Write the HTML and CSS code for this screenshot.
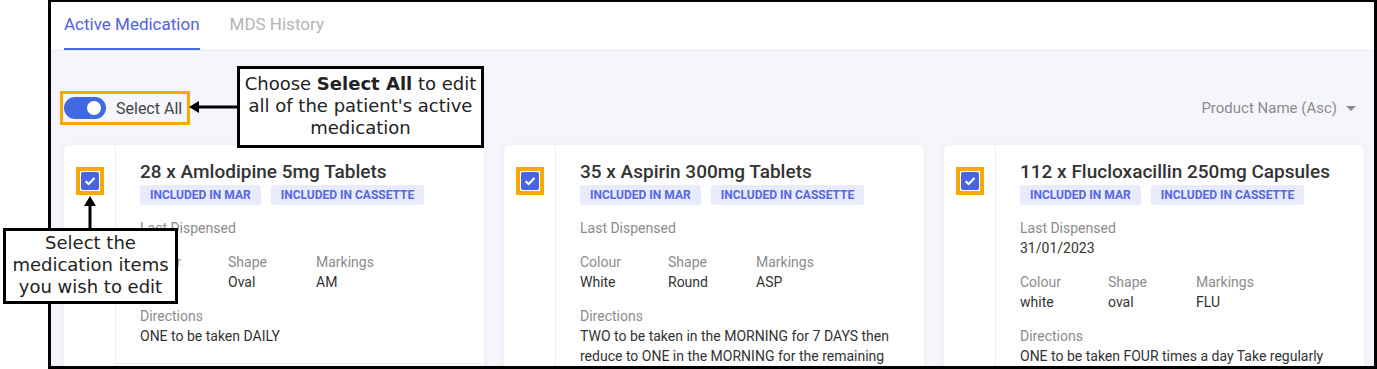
FILE: index.html
```html
<!DOCTYPE html>
<html lang="en">
<head>
    <meta charset="UTF-8">
    <title>Active Medication</title>
    <link rel="stylesheet" href="styles.css">
</head>
<body>
    <div class="frame">
        <nav class="tabs">
            <a class="tab active">Active Medication</a>
            <a class="tab">MDS History</a>
        </nav>

        <main class="content">
            <div class="toolbar">
                <label class="select-all">
                    <span class="switch"><span class="knob"></span></span>
                    <span>Select All</span>
                </label>
                <div class="sort">
                    Product Name (Asc)
                    <svg width="10" height="5" viewBox="0 0 10 5"><polygon points="0,0 10,0 5,5" fill="#8a8a8a"/></svg>
                </div>
            </div>

            <div class="cards">
                <article class="card">
                    <div class="card-check">
                        <span class="check-hl"><span class="checkbox"><svg width="14" height="14" viewBox="0 0 14 14"><polyline points="2.5,7.2 5.6,10 11.5,4" fill="none" stroke="#fff" stroke-width="2"/></svg></span></span>
                    </div>
                    <div class="card-main">
                        <div class="card-body">
                            <h3>28 x Amlodipine 5mg Tablets</h3>
                            <div class="chips">
                                <span class="chip">Included in MAR</span>
                                <span class="chip">Included in Cassette</span>
                            </div>
                            <div class="field">
                                <div class="label">Last Dispensed</div>
                                <div class="value"></div>
                            </div>
                            <div class="props">
                                <div class="prop"><div class="label">Colour</div><div class="value">White</div></div>
                                <div class="prop"><div class="label">Shape</div><div class="value">Oval</div></div>
                                <div class="prop"><div class="label">Markings</div><div class="value">AM</div></div>
                            </div>
                            <div class="field">
                                <div class="label">Directions</div>
                                <div class="value">ONE to be taken DAILY</div>
                            </div>
                        </div>
                        <div class="card-foot"></div>
                    </div>
                </article>

                <article class="card">
                    <div class="card-check">
                        <span class="check-hl"><span class="checkbox"><svg width="14" height="14" viewBox="0 0 14 14"><polyline points="2.5,7.2 5.6,10 11.5,4" fill="none" stroke="#fff" stroke-width="2"/></svg></span></span>
                    </div>
                    <div class="card-main">
                        <div class="card-body">
                            <h3>35 x Aspirin 300mg Tablets</h3>
                            <div class="chips">
                                <span class="chip">Included in MAR</span>
                                <span class="chip">Included in Cassette</span>
                            </div>
                            <div class="field">
                                <div class="label">Last Dispensed</div>
                                <div class="value"></div>
                            </div>
                            <div class="props">
                                <div class="prop"><div class="label">Colour</div><div class="value">White</div></div>
                                <div class="prop"><div class="label">Shape</div><div class="value">Round</div></div>
                                <div class="prop"><div class="label">Markings</div><div class="value">ASP</div></div>
                            </div>
                            <div class="field">
                                <div class="label">Directions</div>
                                <div class="value">TWO to be taken in the MORNING for 7 DAYS then reduce to ONE in the MORNING for the remaining days</div>
                            </div>
                        </div>
                        <div class="card-foot"></div>
                    </div>
                </article>

                <article class="card">
                    <div class="card-check">
                        <span class="check-hl"><span class="checkbox"><svg width="14" height="14" viewBox="0 0 14 14"><polyline points="2.5,7.2 5.6,10 11.5,4" fill="none" stroke="#fff" stroke-width="2"/></svg></span></span>
                    </div>
                    <div class="card-main">
                        <div class="card-body">
                            <h3>112 x Flucloxacillin 250mg Capsules</h3>
                            <div class="chips">
                                <span class="chip">Included in MAR</span>
                                <span class="chip">Included in Cassette</span>
                            </div>
                            <div class="field">
                                <div class="label">Last Dispensed</div>
                                <div class="value">31/01/2023</div>
                            </div>
                            <div class="props">
                                <div class="prop"><div class="label">Colour</div><div class="value">white</div></div>
                                <div class="prop"><div class="label">Shape</div><div class="value">oval</div></div>
                                <div class="prop"><div class="label">Markings</div><div class="value">FLU</div></div>
                            </div>
                            <div class="field">
                                <div class="label">Directions</div>
                                <div class="value">ONE to be taken FOUR times a day Take regularly until the course is completed</div>
                            </div>
                        </div>
                        <div class="card-foot"></div>
                    </div>
                </article>
            </div>
        </main>
    </div>

    <!-- help annotations -->
    <div class="callout callout-all">Choose <strong>Select All</strong> to edit all of the patient's active medication</div>
    <div class="callout callout-items">Select the medication items you wish to edit</div>

    <svg class="arrows" width="1377" height="369" viewBox="0 0 1377 369">
        <line x1="198" y1="107" x2="238" y2="107" stroke="#000" stroke-width="3"/>
        <polygon points="189,107 199,101 199,113" fill="#000"/>
        <line x1="90" y1="204" x2="90" y2="229" stroke="#000" stroke-width="3"/>
        <polygon points="90,196 84,206 96,206" fill="#000"/>
    </svg>
</body>
</html>
```

FILE: styles.css
```css
:root {
    --blue: #4169e1;
    --check-blue: #4a63e6;
    --orange: #f8aa00;
    --text: #333;
    --muted: #8c8c8c;
    --line: #eceff5;
    --bg: #f4f6fb;
}

body {
    margin: 0;
    background: #fff;
    font-family: Roboto, 'Liberation Sans', sans-serif;
    position: relative;
    width: 1377px;
    height: 369px;
    overflow: hidden;
}

.frame {
    margin-left: 48px;
    height: 369px;
    box-sizing: border-box;
    border: 3px solid #000;
    border-top-width: 2px;
    overflow: hidden;
    display: flex;
    flex-direction: column;
}

/* tabs */
.tabs {
    display: flex;
    gap: 30px;
    padding: 0 13px;
    height: 48px;
    flex-shrink: 0;
    background: #fff;
    border-bottom: 1px solid #e8ebf3;
}

.tab {
    display: flex;
    align-items: center;
    padding-bottom: 3px;
    box-sizing: border-box;
    border-bottom: 2px solid transparent;
    font-size: 17px;
    color: #b4b4b4;
}

.tab.active {
    color: #4f63dc;
    border-bottom-color: var(--blue);
}

/* content */
.content {
    flex: 1;
    background: var(--bg);
    padding: 40px 10px 0 13px;
}

.toolbar {
    display: flex;
    justify-content: space-between;
    align-items: center;
    height: 34px;
}

.select-all {
    display: flex;
    align-items: center;
    gap: 10px;
    height: 34px;
    box-sizing: border-box;
    margin-left: -4px;
    padding: 0 5px 0 1px;
    border: 3px solid var(--orange);
    font-size: 16px;
    color: #444;
}

.switch {
    display: flex;
    align-items: center;
    justify-content: flex-end;
    width: 42px;
    height: 22px;
    box-sizing: border-box;
    padding: 0 5px;
    border-radius: 11px;
    background: var(--blue);
}

.knob {
    width: 14px;
    height: 14px;
    border-radius: 50%;
    background: #fff;
}

.sort {
    display: flex;
    align-items: center;
    gap: 9px;
    padding-right: 8px;
    font-size: 15px;
    color: var(--muted);
}

/* cards */
.cards {
    display: grid;
    grid-template-columns: repeat(3, 420px);
    gap: 20px;
    margin-top: 20px;
    align-items: start;
}

.card {
    display: flex;
    background: #fff;
    border-radius: 6px;
    box-shadow: 0 1px 6px rgba(40, 60, 120, 0.08);
}

.card-check {
    width: 52px;
    flex-shrink: 0;
    box-sizing: border-box;
    padding: 22px 0 0 12px;
    border-right: 1px solid var(--line);
}

.check-hl {
    display: block;
    width: 28px;
    height: 28px;
    box-sizing: border-box;
    padding: 1px;
    border: 4px solid var(--orange);
    background: #fff;
}

.checkbox {
    display: flex;
    align-items: center;
    justify-content: center;
    width: 18px;
    height: 18px;
    border-radius: 2px;
    background: var(--check-blue);
}

.card-main {
    flex: 1;
    display: flex;
    flex-direction: column;
}

.card-body {
    padding: 16px 24px 17px 24px;
}

.card-foot {
    height: 40px;
    border-top: 1px solid var(--line);
}

h3 {
    margin: 0;
    font-size: 19px;
    line-height: 22px;
    font-weight: 500;
    color: var(--text);
}

.chips {
    display: flex;
    gap: 10px;
    margin-top: 2px;
}

.chip {
    height: 20px;
    line-height: 20px;
    padding: 0 10px;
    border-radius: 3px;
    background: #e8ebfb;
    color: #5668e4;
    font-size: 12px;
    font-weight: 700;
    text-transform: uppercase;
}

.field {
    margin-top: 14px;
}

.chips + .field {
    margin-top: 13px;
}

.props {
    display: flex;
    margin-top: 14px;
}

.prop {
    width: 88px;
}

.label,
.value {
    font-size: 14px;
    line-height: 20px;
}

.label {
    color: var(--muted);
}

.value {
    color: var(--text);
}

/* annotations */
.callout {
    position: absolute;
    box-sizing: border-box;
    border: 3px solid #000;
    background: #fff;
    font-family: 'DejaVu Sans', sans-serif;
    font-size: 18px;
    line-height: 22px;
    text-align: center;
    color: #222;
}

.callout strong {
    font-weight: 700;
}

.callout-all {
    left: 237px;
    top: 66px;
    width: 247px;
    height: 82px;
    padding: 4px 2px 0;
}

.callout-items {
    left: 3px;
    top: 228px;
    width: 175px;
    height: 76px;
    padding: 1px 2px 0;
}

.arrows {
    position: absolute;
    left: 0;
    top: 0;
    pointer-events: none;
}
```
